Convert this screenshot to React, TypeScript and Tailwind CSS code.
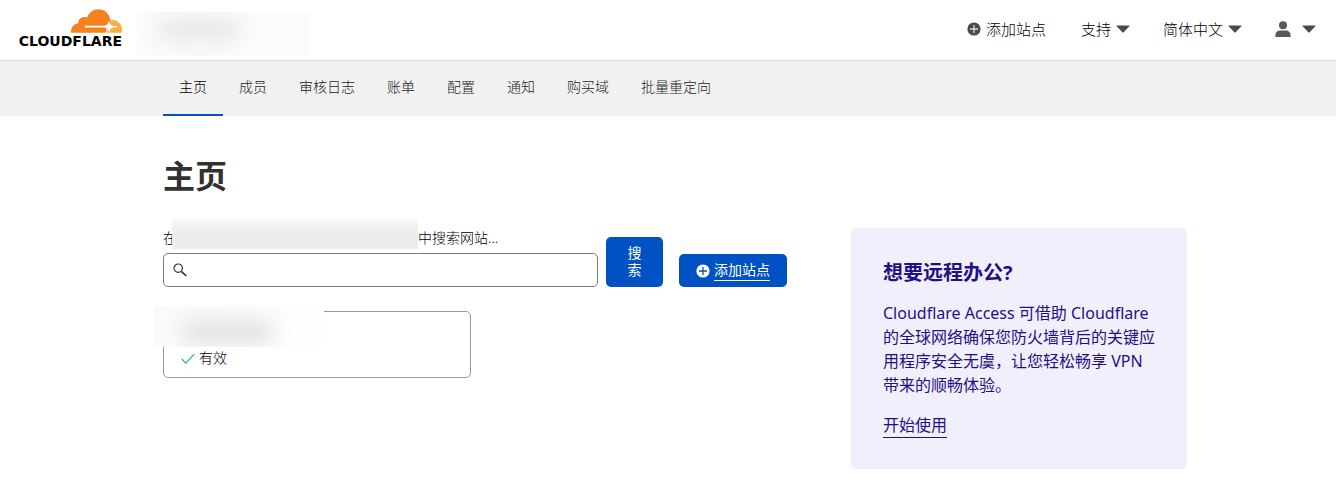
import type { ReactNode } from "react";

const tabs = ["主页", "成员", "审核日志", "账单", "配置", "通知", "购买域", "批量重定向"];

function Logo() {
  return (
    <a href="#" aria-label="Cloudflare" className="flex w-[106px] flex-col items-end text-black">
      <svg viewBox="0 0 151 70" className="h-[24px] w-[51px]" aria-hidden="true">
        <path
          fill="#f6821f"
          d="M0 70C-1 54 9 43 22 42C20 28 35 19 48 25C53 9 66 0 81 0C99 0 112 12 116 29C117 36 115 43 112 50L104 62C105 66 103 68 102 70Z"
        />
        <path fill="#fbad41" d="M118 31C137 30 151 44 151 61C151 64 151 67 150 70H106C105 64 111 56 113 49Z" />
        <path fill="#fff" d="M41 49H99C106 48 110 43 112 34C114 43 119 49 126 50H136V54H126C119 55 115 60 113 70C110 60 106 55 100 54H41Z" />
      </svg>
      <span className="font-['DejaVu_Sans',sans-serif] text-[14px] leading-[16px] font-bold">CLOUDFLARE</span>
    </a>
  );
}

function PlusCircle({ cross }: { cross: string }) {
  return (
    <svg viewBox="0 0 14 14" className="size-[14px] shrink-0" aria-hidden="true">
      <circle cx="7" cy="7" r="6.6" fill="currentColor" />
      <path d="M7 3v8M3 7h8" stroke={cross} strokeWidth="1.3" />
    </svg>
  );
}

function Caret() {
  return (
    <svg viewBox="0 0 14 8" className="h-[8px] w-[14px] shrink-0 text-[#4a4a4a]" aria-hidden="true">
      <path d="M0.9 0.4H13.1Q13.9 0.5 13.3 1.2L7.5 7.4Q7 7.8 6.5 7.4L0.7 1.2Q0.1 0.5 0.9 0.4Z" fill="currentColor" />
    </svg>
  );
}

function MenuButton({ children, label }: { children: ReactNode; label?: string }) {
  return (
    <button type="button" aria-label={label} className="flex items-center gap-[5px] whitespace-nowrap">
      {children}
      <Caret />
    </button>
  );
}

export default function App() {
  return (
    <div className="min-h-screen bg-white font-['Noto_Sans','Noto_Sans_CJK_SC',sans-serif] text-[14px] font-light text-black">
      <header className="flex h-[61px] items-center justify-between border-b border-[#d9d9d9] pr-5 pl-4">
        <div className="flex items-center gap-[15px] pt-[7px]">
          <div className="-mt-[10px]">
            <Logo />
          </div>
          <div className="flex h-[44px] w-[172px] items-start overflow-hidden bg-[#fbfbfb] pt-2 pl-5">
            <div className="h-5 w-[84px] rounded-full bg-[#e4e6e6] blur-[10px]" />
          </div>
        </div>
        <div className="flex items-center pb-[2px] text-[15px]">
          <a href="#" className="mr-[35px] flex items-center gap-[5px] whitespace-nowrap">
            <span className="text-[#4a4a4a]">
              <PlusCircle cross="#d8d8d8" />
            </span>
            添加站点
          </a>
          <div className="flex gap-[33px]">
            <MenuButton>支持</MenuButton>
            <MenuButton>简体中文</MenuButton>
            <MenuButton label="账户">
              <svg viewBox="0 0 16 16" className="mr-[6px] size-[16px] text-[#595959]" aria-hidden="true">
                <circle cx="8" cy="4.2" r="4" fill="currentColor" />
                <path d="M0.4 16V14C0.4 11.2 2.6 9.6 5 9.6H11C13.4 9.6 15.6 11.2 15.6 14V16Z" fill="currentColor" />
              </svg>
            </MenuButton>
          </div>
        </div>
      </header>

      <nav className="bg-[#f1f1f1]">
        <div className="mx-auto flex h-[55px] max-w-[1038px] pl-[14px]">
          {tabs.map((tab, i) => (
            <a
              key={tab}
              href="#"
              aria-current={i === 0 ? "page" : undefined}
              className={
                i === 0
                  ? "flex items-center border-b-2 border-[#0051c3] px-4 pb-[2px] whitespace-nowrap text-black"
                  : "flex items-center border-b-2 border-transparent px-4 pb-[2px] whitespace-nowrap text-[#222222]"
              }
            >
              {tab}
            </a>
          ))}
        </div>
      </nav>

      <main className="mx-auto max-w-[1038px] pt-[36px] pl-[14px]">
        <h1 className="text-[32px] leading-[48px] font-bold text-[#313131]">主页</h1>
        <div className="mt-[28px] flex items-start gap-[64px]">
          <div className="min-w-0 flex-1">
            <form className="flex items-end pb-6" onSubmit={(e) => e.preventDefault()}>
              <div className="flex-1">
                <label htmlFor="site-search" className="flex h-[25px] items-start leading-5 whitespace-nowrap">
                  在
                  <span className="relative h-5 w-[241px]">
                    <span className="absolute -top-[10px] right-0 -left-[5px] h-[31px] bg-linear-to-b from-[#fafafa] via-[#ebebeb] to-[#ececec]" />
                  </span>
                  中搜索网站...
                </label>
                <div className="flex h-[34px] items-center rounded-[5px] border border-[#797979] pl-[9px]">
                  <svg viewBox="0 0 14 14" className="size-[14px] shrink-0" aria-hidden="true">
                    <circle cx="5.2" cy="5.2" r="4.2" fill="none" stroke="#313131" strokeWidth="1.2" />
                    <path d="M8.3 8.3L13.3 13" stroke="#313131" strokeWidth="1.7" />
                  </svg>
                  <input id="site-search" type="text" className="h-full min-w-0 flex-1 bg-transparent px-2 outline-none" />
                </div>
              </div>
              <button type="submit" className="ml-2 h-[50px] w-[57px] rounded-[5px] bg-[#0051c3] px-5 pb-[2px] leading-[17px] font-normal text-white">
                搜索
              </button>
              <button
                type="button"
                className="ml-4 flex h-[33px] items-center gap-1 rounded-[5px] bg-[#0051c3] px-[17px] leading-5 font-normal whitespace-nowrap text-white"
              >
                <PlusCircle cross="#0051c3" />
                <span className="border-b border-white">添加站点</span>
              </button>
            </form>

            <a href="#" className="relative flex h-[67px] w-[308px] items-end gap-[4px] rounded-[5px] border border-[#999999] px-[17px] pb-[9px]">
              <span className="absolute -top-[6px] -left-[10px] h-[41px] w-[170px] overflow-hidden bg-linear-to-r from-[#fafafa] to-[#fefefe]">
                <span className="absolute top-4 left-7 h-5 w-[92px] rounded-full bg-[#dedede] blur-[10px]" />
              </span>
              <svg viewBox="0 0 14 12" className="mb-[3px] h-[12px] w-[14px]" aria-hidden="true">
                <path d="M0.8 6L4.8 10.2L13.2 1.2" fill="none" stroke="#2db35e" strokeWidth="1.2" />
              </svg>
              <span className="leading-5">有效</span>
            </a>
          </div>

          <aside className="w-[336px] shrink-0 rounded-[5px] bg-[#f2effd] px-8 pt-[29px] pb-[31px] text-[16px] leading-6 font-normal text-[#1f1184]">
            <h2 className="text-[20px] leading-8 font-bold">想要远程办公?</h2>
            <p className="mt-3">
              Cloudflare Access 可借助 Cloudflare 的全球网络确保您防火墙背后的关键应用程序安全无虞，让您轻松畅享 VPN 带来的顺畅体验。
            </p>
            <a href="#" className="mt-4 inline-block border-b border-[#1f1184]">
              开始使用
            </a>
          </aside>
        </div>
      </main>
    </div>
  );
}
